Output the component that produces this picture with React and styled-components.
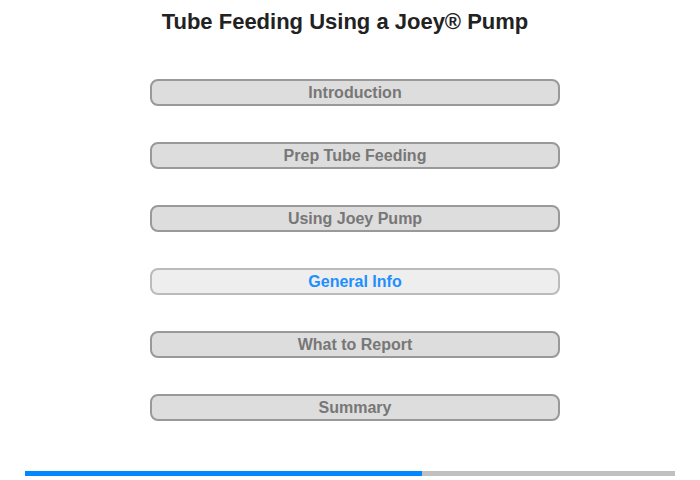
import styled, { createGlobalStyle } from 'styled-components';

const GlobalStyle = createGlobalStyle`
    body {
        margin: 0;
        background: #FFFFFF;
        font-family: 'Liberation Sans', Arial, sans-serif;
    }
`;

const sections = [
    'Introduction',
    'Prep Tube Feeding',
    'Using Joey Pump',
    'General Info',
    'What to Report',
    'Summary'
];

export default function App() {
    const active = 3;
    const progress = 397 / 650;

    return (
        <Page>
            <GlobalStyle />
            <Title>Tube Feeding Using a Joey® Pump</Title>
            <Menu>
                {sections.map((s, i) => (
                    <MenuButton key={s} $active={i === active}>{s}</MenuButton>
                ))}
            </Menu>
            <Track>
                <Fill style={{ width: `${progress * 100}%` }} />
            </Track>
        </Page>
    );
}

const Page = styled.div`
    width: 700px;
    height: 480px;
    display: flex;
    flex-direction: column;
    box-sizing: border-box;
`;

const Title = styled.h1`
    margin: 0;
    padding: 9px 10px 0 0;
    height: 26px;
    line-height: 26px;
    font-size: 22px;
    font-weight: 700;
    text-align: center;
    color: #222222;
`;

const Menu = styled.div`
    display: flex;
    flex-direction: column;
    gap: 36px;
    margin: 44px 0 0 150px;
    width: 410px;
`;

const MenuButton = styled.div`
    height: 27px;
    box-sizing: border-box;
    border: 2px solid ${p => p.$active ? '#BBBBBB' : '#999999'};
    border-radius: 8px;
    background: ${p => p.$active ? '#EEEEEE' : '#DDDDDD'};
    color: ${p => p.$active ? '#1E8FFF' : '#777777'};
    font-size: 16px;
    font-weight: 700;
    line-height: 23px;
    text-align: center;
    cursor: pointer;
`;

const Track = styled.div`
    margin: 50px 0 0 25px;
    width: 650px;
    height: 5px;
    background: #C0C0C0;
`;

const Fill = styled.div`
    height: 100%;
    background: #0088FF;
`;
